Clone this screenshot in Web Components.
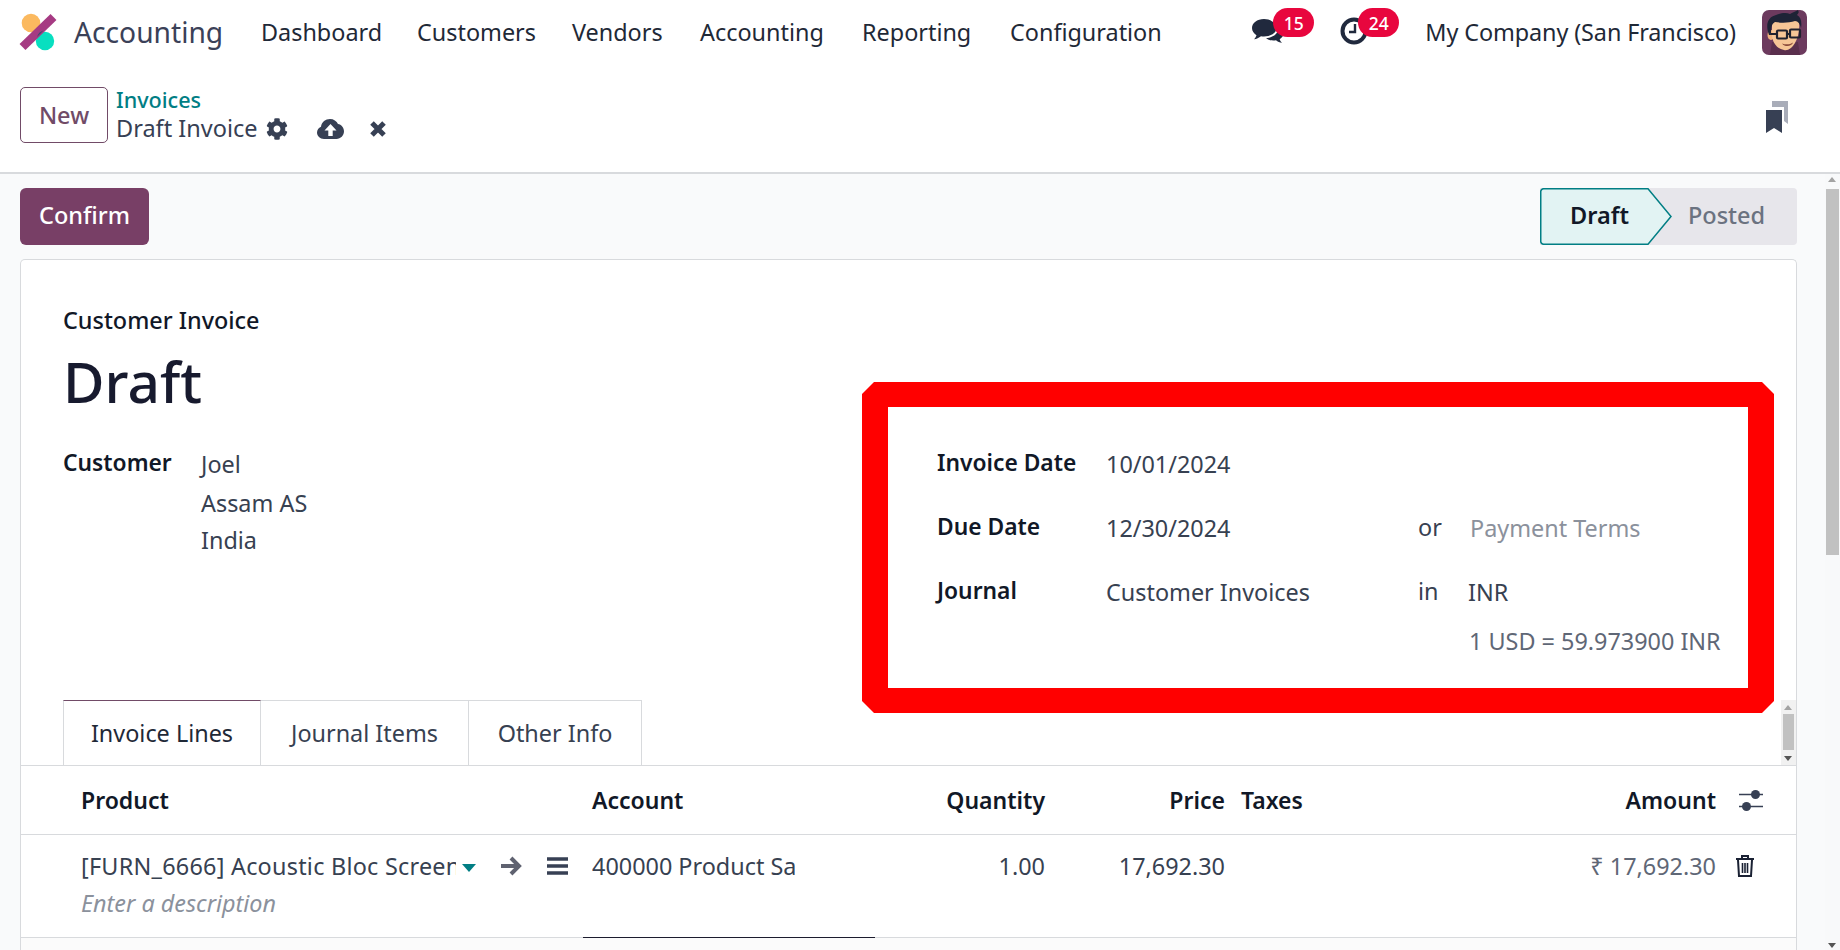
<!DOCTYPE html>
<html lang="en"><head><meta charset="utf-8"><title>Accounting</title>
<style>
html,body{margin:0;height:950px;width:1840px;overflow:hidden;background:#fff;font-family:"Noto Sans","Open Sans",sans-serif;color:#374151}
</style></head><body>
<o-app></o-app>
<template id="t-app"><style>
:host{display:flex;flex-direction:column;height:950px;width:1840px;overflow:hidden}
.body{flex:1;display:flex;min-height:0;background:#f9fafb}
.main{flex:1;min-width:0;padding:14px 28px 0 20px;display:flex;flex-direction:column;gap:14px;overflow:hidden}
.actions{display:flex;justify-content:space-between;height:57px;flex:none}
</style>
<o-navbar></o-navbar><o-control-panel></o-control-panel>
<div class="body"><div class="main">
<div class="actions"><o-button-primary>Confirm</o-button-primary><o-statusbar></o-statusbar></div>
<o-sheet></o-sheet></div><o-scrollbar></o-scrollbar></div>
</template>

<template id="t-navbar"><style>
:host{display:grid;grid-template-columns:auto 156px 155px 128px 162px 148px auto 1fr auto auto auto auto;align-items:center;height:64px;padding-left:19px;background:#fff;font-size:23.4px;color:#1f2937;flex:none}
.brand{display:flex;align-items:center;gap:17px;font-size:28.2px;color:#3b4158;width:242px}
svg{display:block}
.sys{position:relative;display:block;width:89px;height:64px}
.sys svg{position:absolute;left:0;top:16px}
.badge{position:absolute;left:22px;top:8px;width:41px;height:29px;background:#e8063e;color:#fff;border-radius:15px;font-size:17.500px;font-weight:500;display:flex;align-items:center;justify-content:center}
.co{margin:0 26px 0 0;letter-spacing:-.1px;white-space:nowrap}
.av{margin-right:33px;display:block}
</style>
<div class="brand"><svg width="38" height="38" viewBox="0 0 38 38"><circle cx="12" cy="10" r="9.300" fill="#fbb95f"/><circle cx="26" cy="28" r="9.200" fill="#08dfc0"/><path d="M3.500 34L34.500 4" stroke="#a63a83" stroke-width="8.500"/><path d="M18 24L24.500 17.500A9.200 9.200 0 0 0 18 24z" fill="#3f4b70"/></svg><span>Accounting</span></div>
<span>Dashboard</span><span>Customers</span><span>Vendors</span><span>Accounting</span><span>Reporting</span><span>Configuration</span>
<span></span>
<span class="sys"><svg width="34" height="30" viewBox="0 0 34 30"><path d="M13 3C6 3 1 7 1 12c0 3 1.800 5.500 4.500 7.200-.4 1.500-1.500 3-2.500 4 2.500-.3 5-1.400 7-3 1 .2 2 .3 3 .3 7 0 12.500-3.800 12.500-8.500S20 3 13 3z" fill="#20293d"/><path d="M27.300 10.500c3 1.500 5.200 4 5.200 6.800 0 2.500-1.600 4.500-3.800 6 .3 1.300 1.300 2.700 2.300 3.500-2.200-.2-4.400-1.200-6-2.500-.8.200-1.700.2-2.600.2-3 0-5.500-.8-7.400-2.300 6.500-.3 13-4 12.300-11.700z" fill="#20293d"/></svg><span class="badge">15</span></span>
<span class="sys" style="width:85px"><svg width="30" height="30" viewBox="0 0 30 30" style="top:15px;left:0"><circle cx="14" cy="16" r="11.500" fill="none" stroke="#20293d" stroke-width="4"/><path d="M15 9v8H9" fill="none" stroke="#20293d" stroke-width="2.400"/></svg><span class="badge" style="left:18px">24</span></span>
<span class="co">My Company (San Francisco)</span>
<svg class="av" width="45" height="45" viewBox="0 0 45 45"><rect width="45" height="45" rx="7" fill="#6c3a5e"/><path d="M8 45L10 32H36L38 45z" fill="#5a2f4d"/><ellipse cx="9" cy="25" rx="3.500" ry="5" fill="#efb27e"/><path d="M10 12C10 8 35 4 37 12c1 8-1 16-4 21-3 5-7 8-11 7-6-1-11-6-12-14z" fill="#f6c596"/><path d="M7 25C3 14 6 7 14 5c5-2 10-3 14-1 2-1 6-3 8-4 1 2 1 3-1 5 4 2 5 7 4 13-1-4-3-7-6-7-6 2-14 2-20 1-4 2-4 7-4 13z" fill="#1e2336"/><g fill="none" stroke="#20212e" stroke-width="2.200"><rect x="15" y="20.500" width="10" height="8" rx="1"/><rect x="28" y="19.500" width="10" height="8" rx="1"/><path d="M25 24h3M15 24l-6 0"/></g><path d="M20 33.500c4 1.500 8 1 11-1-1 4-8 5-11 1z" fill="#8a4a3a"/></svg>
</template>

<template id="t-cp"><style>
:host{display:flex;align-items:center;height:108px;padding:0 52px 0 20px;background:#fff;border-bottom:2px solid #d8dadd;flex:none;box-sizing:content-box}
.new{box-sizing:border-box;width:88px;height:56px;border:1px solid #714b67;border-radius:5px;color:#714b67;font-size:23.500px;font-weight:500;display:flex;align-items:center;justify-content:center;margin-right:8px;margin-top:-6px}
.crumb{display:flex;flex-direction:column;line-height:29px;font-size:23.500px;margin-top:-8px}
.inv{color:#017e84;font-weight:500;font-size:21.600px}
.cur{display:flex;align-items:center;color:#374054}
svg{display:block}
.sp{flex:1}
</style>
<div class="new">New</div>
<div class="crumb"><span class="inv">Invoices</span><span class="cur">Draft Invoice
<svg width="22" height="22" viewBox="0 0 512 512" style="margin-left:8px" fill="#374054"><path d="M487.4 315.7l-42.6-24.6c4.3-23.2 4.3-47 0-70.2l42.6-24.6c4.9-2.800 7.100-8.600 5.500-14-11.100-35.600-30-67.800-54.700-94.600-3.800-4.100-10-5.100-14.800-2.300L380.800 110c-17.900-15.400-38.500-27.300-60.800-35.100V25.800c0-5.600-3.900-10.500-9.400-11.700-36.700-8.200-74.300-7.800-109.200 0-5.500 1.200-9.400 6.100-9.400 11.700V75c-22.200 7.900-42.800 19.800-60.800 35.100L88.700 85.500c-4.900-2.800-11-1.900-14.800 2.300-24.700 26.700-43.600 58.900-54.700 94.600-1.700 5.400.6 11.200 5.500 14L67.300 221c-4.300 23.200-4.300 47 0 70.200l-42.600 24.600c-4.900 2.800-7.100 8.600-5.500 14 11.100 35.600 30 67.800 54.700 94.600 3.800 4.100 10 5.100 14.800 2.300l42.600-24.600c17.900 15.400 38.500 27.300 60.800 35.100v49.200c0 5.600 3.900 10.500 9.400 11.700 36.700 8.200 74.300 7.800 109.200 0 5.500-1.200 9.400-6.100 9.400-11.700v-49.200c22.200-7.900 42.800-19.800 60.800-35.100l42.600 24.600c4.900 2.800 11 1.900 14.800-2.300 24.700-26.700 43.600-58.900 54.700-94.600 1.500-5.500-.7-11.300-5.600-14.100zM256 336c-44.100 0-80-35.900-80-80s35.900-80 80-80 80 35.900 80 80-35.900 80-80 80z"/></svg>
<svg width="27" height="22" viewBox="0 0 27 22" style="margin-left:29px"><path d="M7 21C3 21 0 18 0 14.500 0 11.800 1.600 9.600 4 8.700 4.600 4 8.500 1 13 1c3.600 0 6.700 2 8 5 3.300.6 6 3.600 6 7.300C27 17.500 23.600 21 19.500 21z" fill="#374054"/><path d="M13.500 6l6 6.500h-3.800V18h-4.400v-5.500H7.500z" fill="#fff"/></svg>
<svg width="18" height="18" viewBox="0 0 18 18" style="margin-left:25px"><path d="M3 3L15 15M15 3L3 15" stroke="#374054" stroke-width="5"/></svg></span></div>
<div class="sp"></div>
<svg width="22" height="32" viewBox="0 0 22 32" style="margin-top:-2px"><path d="M6 0H22V23L18 20V6H6z" fill="#a9adb9"/><path d="M0 9H16V32L8 27 0 32z" fill="#374054"/></svg>
</template>

<template id="t-primary"><style>
:host{display:flex;align-items:center;justify-content:center;width:129px;height:57px;box-sizing:border-box;padding-bottom:4px;background:#783f66;color:#fff;border-radius:6px;font-size:23.500px;font-weight:500}
</style><slot></slot></template>

<template id="t-status"><style>
:host{display:flex;width:257px;height:57px;background:#e7e6eb;border-radius:0 4px 4px 0;font-size:23.500px;font-weight:500;position:relative}
svg{position:absolute;left:0;top:0}
.d{position:relative;width:131px;display:flex;align-items:center;padding:0 0 3px 30px;box-sizing:border-box;color:#111827;font-weight:600}
.p{position:relative;display:flex;align-items:center;padding:0 0 3px 17px;color:#6b7280}
</style>
<svg width="132" height="57" viewBox="0 0 132 57"><path d="M4 .75H108L131 28.500 108 56.250H4A3 3 0 0 1 .75 53V4A3 3 0 0 1 4 .75z" fill="#e2f3f3" stroke="#017e84" stroke-width="1.500"/></svg>
<span class="d">Draft</span><span class="p">Posted</span></template>

<template id="t-scroll"><style>
:host{display:block;width:15px;flex:none;background:#f8f9fa;position:relative}
.t{position:absolute;left:0;right:0;top:15px;height:366px;background:#c1c1c1;margin:0 1px}
.u,.d{position:absolute;left:3px;width:0;height:0;border:4.500px solid transparent}
.u{top:3px;border-bottom:5px solid #a3a3a3;border-top:0}
.d{bottom:2px;border-top:5px solid #555;border-bottom:0}
</style><div class="u"></div><div class="t"></div><div class="d"></div></template>

<template id="t-sheet"><style>
:host{display:block;position:relative;flex:1;min-height:0;background:#fff;border:1px solid #d8dadd;border-bottom:0;border-radius:5px 5px 0 0;box-sizing:border-box;color:#374151}
.head{padding:46px 42px 0}
.kind{font-size:23.400px;font-weight:500;line-height:28px;color:#111827}
h1{margin:16px 0 0;font-size:56.800px;line-height:62px;font-weight:500;color:#171a2e}
.groups{display:grid;grid-template-columns:874px 1fr;margin-top:20px}
.cust{display:grid;grid-template-columns:138px 1fr;align-content:start;font-size:23.400px;padding-top:12px}
.lab{font-weight:600;color:#111827}
.dates .lab,.cust .lab{font-size:22.800px}
.val{line-height:38px}
.val div:first-child{line-height:40px}
.cust .lab{line-height:38px}
.dates{display:grid;grid-template-columns:169px 312px 52px 1fr;grid-auto-rows:64px;align-items:center;font-size:23.400px}
.dates .lab{margin-top:-3px}
.con{margin-top:-3px;color:#374151}
.mut{color:#8b919c}
.inr{margin-left:-2px}
.last{height:48px;align-self:start;line-height:34px;color:#5f6776;grid-column:4;margin-left:-1px;white-space:nowrap}
.tabs{display:flex;justify-content:space-between;margin-top:12px;padding-left:42px;height:65px}
.tabs>div:first-child{display:flex}
.tab{box-sizing:border-box;border:1px solid #d8dadd;border-left:0;display:flex;align-items:center;justify-content:center;font-size:23.400px;color:#374151;border-bottom:0}
.tab.on{border-left:1px solid #d8dadd;border-top:1px solid #714b67;color:#1f2937}
.sb{width:15px;height:65px;background:#f1f1f1;position:relative}
.sb i{position:absolute;left:2px;right:2px;top:14px;height:36px;background:#c1c1c1}
.sb b{position:absolute;left:3px;width:0;height:0;border:4.500px solid transparent}
.sb .a{top:5px;border-bottom:5px solid #a3a3a3;border-top:0}
.sb .z{bottom:4px;border-top:5px solid #555;border-bottom:0}
.note{position:absolute;left:841px;top:122px;width:912px;height:331px;box-sizing:border-box;border:25px solid #f00;border-left-width:26px;border-right-width:26px;clip-path:polygon(12px 0,calc(100% - 12px) 0,100% 12px,100% calc(100% - 12px),calc(100% - 12px) 100%,12px 100%,0 calc(100% - 12px),0 12px)}
</style>
<div class="head"><div class="kind">Customer Invoice</div><h1>Draft</h1>
<div class="groups"><div class="cust"><span class="lab">Customer</span><div class="val"><div>Joel</div><div>Assam AS</div><div style="line-height:36px">India</div></div></div>
<div class="dates"><span class="lab">Invoice Date</span><span>10/01/2024</span><span></span><span></span>
<span class="lab">Due Date</span><span>12/30/2024</span><span class="con">or</span><span class="mut">Payment Terms</span>
<span class="lab">Journal</span><span>Customer Invoices</span><span class="con">in</span><span class="inr">INR</span>
<span class="last">1 USD = 59.973900 INR</span></div></div></div>
<div class="tabs"><div><span class="tab on" style="width:198px">Invoice Lines</span><span class="tab" style="width:208px">Journal Items</span><span class="tab" style="width:173px">Other Info</span></div><div class="sb"><b class="a"></b><i></i><b class="z"></b></div></div>
<o-lines></o-lines>
<div class="note"></div>
</template>

<template id="t-lines"><style>
:host{display:block;font-size:23.400px;background:#fbfbfb;height:186px}
.r{display:grid;grid-template-columns:511px 288px 165px 180px 16px 159px 316px 80px;padding-left:60px;background:#fff;border-top:1px solid #d8dadd;border-bottom:1px solid #d8dadd;position:relative}
.h{height:68px;align-items:center;font-weight:600;color:#111827;font-size:23px}
.n{text-align:right}
.b{height:102px;border-top:0;color:#374151;padding-top:0;box-sizing:content-box}
.b>*{margin-top:13px;line-height:36px}
.p{display:flex;align-items:center;height:36px}
.p span{width:375px;overflow:hidden;white-space:nowrap;flex:none;letter-spacing:.25px}
svg{display:block}
.acc{width:203px;overflow:hidden;white-space:nowrap}
.desc{position:absolute;left:60px;top:50px;margin:0;font-style:italic;color:#8b919c}
.amt{color:#5f6776}
.focus{position:absolute;left:562px;bottom:-1px;width:292px;height:1.500px;background:#1c1c2e;margin:0}
</style>
<div class="r h"><span>Product</span><span>Account</span><span class="n">Quantity</span><span class="n">Price</span><span></span><span>Taxes</span><span class="n">Amount</span>
<svg width="26" height="24" viewBox="0 0 26 24" style="margin-left:22px"><path d="M1 6.500H25M1 18.500H25" stroke="#374054" stroke-width="1.500"/><circle cx="17.500" cy="6.500" r="4.500" fill="#374054"/><circle cx="8.500" cy="18.500" r="4.500" fill="#374054"/></svg></div>
<div class="r b"><div class="p"><span>[FURN_6666] Acoustic Bloc Screens</span>
<svg width="14" height="8" viewBox="0 0 14 8" style="margin-left:6px;margin-top:4px"><path d="M0 0H14L7 8z" fill="#017e84"/></svg>
<svg width="22" height="20" viewBox="0 0 22 20" style="margin-left:24px"><path d="M1 10H19M11 2L19 10 11 18" fill="none" stroke="#5f6270" stroke-width="4"/></svg>
<svg width="21" height="18" viewBox="0 0 21 18" style="margin-left:25px;margin-top:-1px"><path d="M0 2H21M0 9H21M0 16H21" stroke="#374054" stroke-width="3.500"/></svg></div>
<div><div class="acc">400000 Product Sales</div></div><div class="n">1.00</div><div class="n">17,692.30</div><div></div><div></div><div class="n amt">₹ 17,692.30</div>
<svg width="20" height="24" viewBox="0 0 20 24" style="margin:19px 0 0 19px"><path d="M3 6L4 22H16L17 6M1 5H19M7 5V2H13V5" fill="none" stroke="#1a2133" stroke-width="2"/><path d="M7.500 9V19M10 9V19M12.500 9V19" stroke="#1a2133" stroke-width="1.600"/></svg>
<div class="desc">Enter a description</div><div class="focus"></div></div>
</template>

<script>
function make(tag,id){customElements.define(tag,class extends HTMLElement{constructor(){super();this.attachShadow({mode:'open'}).appendChild(document.getElementById(id).content.cloneNode(true));}});}
[['o-navbar','t-navbar'],['o-control-panel','t-cp'],['o-button-primary','t-primary'],['o-statusbar','t-status'],['o-scrollbar','t-scroll'],['o-lines','t-lines'],['o-sheet','t-sheet'],['o-app','t-app']].forEach(a=>make(a[0],a[1]));
</script>
</body></html>
